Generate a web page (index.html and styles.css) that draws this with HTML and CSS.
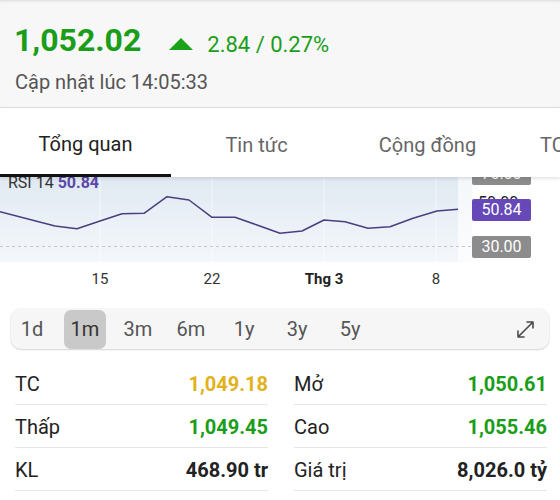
FILE: index.html
```html
<!DOCTYPE html>
<html lang="vi">
<head>
<meta charset="utf-8">
<link rel="stylesheet" href="styles.css">
</head>
<body>
<div class="page">
  <header class="quote">
    <div class="price-row">
      <span class="price">1,052.02</span>
      <span class="change"><span class="tri"></span><span>2.84 / 0.27%</span></span>
    </div>
    <div class="updated">Cập nhật lúc 14:05:33</div>
  </header>

  <nav class="tabs">
    <div class="tab active">Tổng quan</div>
    <div class="tab">Tin tức</div>
    <div class="tab">Cộng đồng</div>
    <div class="tab tab-last">TCDN</div>
  </nav>

  <section class="chart">
    <div class="plot">
      <div class="rsi-label">RSI 14 <b>50.84</b></div>
      <svg class="lines" width="472" height="85" viewBox="0 0 472 85">
        <line x1="100" y1="0" x2="100" y2="85" class="vgrid"/>
        <line x1="212" y1="0" x2="212" y2="85" class="vgrid"/>
        <line x1="324" y1="0" x2="324" y2="85" class="vgrid"/>
        <line x1="436" y1="0" x2="436" y2="85" class="vgrid"/>
        <line x1="0" y1="69.5" x2="472" y2="69.5" class="dash"/>
        <polyline class="rsi" points="0,34.7 55,49 77,51.7 100,44 122,36.7 144,36.3 167,19.7 189,23 212,40.3 235,40.3 257,48 280,56.3 302,54 324,43 345,44.7 368,51.3 390,49.7 413,41.3 437,34 458,32.3"/>
      </svg>
    </div>
    <div class="axis">
      <div class="tag tag-grey tag-70">70.00</div>
      <div class="ghost">50.00</div>
      <div class="tag tag-purple">50.84</div>
      <div class="tag tag-grey tag-30">30.00</div>
    </div>
  </section>

  <div class="xaxis">
    <span>15</span>
    <span>22</span>
    <span class="strong">Thg 3</span>
    <span>8</span>
  </div>

  <div class="periods">
    <span class="period">1d</span>
    <span class="period selected">1m</span>
    <span class="period">3m</span>
    <span class="period">6m</span>
    <span class="period">1y</span>
    <span class="period">3y</span>
    <span class="period">5y</span>
    <svg class="expand" width="19" height="19" viewBox="0 0 19 19">
      <path d="M2 17 L17 2 M11 2 H17 V8 M2 11 V17 H8" fill="none" stroke="#4a4a4a" stroke-width="1.6" stroke-linecap="round" stroke-linejoin="round"/>
    </svg>
  </div>

  <section class="stats">
    <div class="stat"><span class="label">TC</span><span class="val ref">1,049.18</span></div>
    <div class="stat"><span class="label">Mở</span><span class="val up">1,050.61</span></div>
    <div class="stat"><span class="label">Thấp</span><span class="val up">1,049.45</span></div>
    <div class="stat"><span class="label">Cao</span><span class="val up">1,055.46</span></div>
    <div class="stat"><span class="label">KL</span><span class="val">468.90 tr</span></div>
    <div class="stat"><span class="label">Giá trị</span><span class="val">8,026.0 tỷ</span></div>
  </section>
</div>
</body>
</html>
```

FILE: styles.css
```css
* { box-sizing: border-box; }
html, body {
  margin: 0;
  padding: 0;
  background: #fff;
}
body {
  font-family: Roboto, "Noto Sans", "Liberation Sans", sans-serif;
  color: #222;
  width: 560px;
  height: 500px;
  overflow: hidden;
}
.page { width: 560px; }

/* header */
.quote {
  height: 108px;
  background: #f7f7f7;
  border-bottom: 1px solid #dcdcdc;
  box-shadow: inset 0 3px 3px -2px rgba(0,0,0,0.12);
  padding: 21px 0 0 14px;
}
.price-row {
  display: flex;
  align-items: flex-start;
  height: 38px;
}
.price {
  font-size: 32px;
  line-height: 38px;
  font-weight: 700;
  color: #1a9e1a;
}
.change {
  display: flex;
  align-items: center;
  margin-top: 11px;
  margin-left: 28px;
  font-size: 22px;
  line-height: 26px;
  color: #1a9e1a;
}
.tri {
  width: 0;
  height: 0;
  border-left: 12px solid transparent;
  border-right: 12px solid transparent;
  border-bottom: 12px solid #1aa31a;
  margin-right: 14px;
  margin-bottom: 3px;
}
.updated {
  margin-top: 11px;
  font-size: 20px;
  line-height: 24px;
  color: #555;
  padding-left: 1px;
}

/* tabs */
.tabs {
  position: relative;
  z-index: 2;
  display: flex;
  height: 69px;
  background: #fff;
  overflow: hidden;
  box-shadow: 0 2px 3px rgba(0,0,0,0.10);
}
.tab {
  flex: 0 0 171px;
  text-align: center;
  font-size: 20px;
  line-height: 69px;
  padding-top: 3px;
  color: #666;
  white-space: nowrap;
}
.tab.active {
  color: #222;
  border-bottom: 3px solid #111;
  line-height: 66px;
}
.tab-last {
  text-align: left;
  padding-left: 27px;
}

/* chart */
.chart {
  display: flex;
  height: 85px;
  overflow: hidden;
  position: relative;
}
.plot {
  position: relative;
  width: 472px;
  height: 85px;
  background: linear-gradient(90deg, transparent 0 458px, rgba(255,255,255,0.65) 458px),
              linear-gradient(180deg, #e0e9f2 0%, #eef3f8 70%, #f4f7fa 100%);
}
.lines { display: block; }
.vgrid { stroke: rgba(255,255,255,0.6); stroke-width: 1; }
.dash { stroke: #c3c7cc; stroke-width: 1; stroke-dasharray: 3 3; }
.rsi { fill: none; stroke: #4a3e80; stroke-width: 1.5; stroke-linejoin: round; }
.rsi-label {
  position: absolute;
  left: 8px;
  top: -3px;
  font-size: 16px;
  line-height: 18px;
  color: #333;
}
.rsi-label b { color: #5b48a8; font-weight: 700; }

.axis {
  position: relative;
  flex: 1;
  background: #fff;
}
.tag {
  position: absolute;
  left: 0;
  width: 59px;
  height: 22px;
  border-radius: 2px;
  color: #fff;
  font-size: 16px;
  line-height: 22px;
  text-align: center;
}
.tag-grey { background: #8c8c8c; }
.tag-70 { top: -14px; }
.tag-purple { top: 22px; background: #6648b8; }
.tag-30 { top: 59px; }
.ghost {
  position: absolute;
  left: 6px;
  top: 17px;
  font-size: 16px;
  line-height: 18px;
  color: #222;
}

/* x axis */
.xaxis {
  display: flex;
  height: 34px;
  padding-left: 44px;
  align-items: center;
}
.xaxis span {
  width: 112px;
  text-align: center;
  font-size: 15px;
  color: #333;
}
.xaxis .strong { font-weight: 700; color: #222; }

/* period selector */
.periods {
  margin: 13px 11px 0;
  height: 40px;
  display: flex;
  align-items: center;
  gap: 11px;
  background: #f6f6f6;
  border-radius: 10px;
  box-shadow: 0 1px 2px rgba(0,0,0,0.14), 0 0 0 1px rgba(0,0,0,0.03);
}
.period {
  width: 42px;
  height: 39px;
  line-height: 39px;
  text-align: center;
  font-size: 20px;
  color: #555;
  border-radius: 7px;
}
.period.selected {
  background: #c9c9c9;
  color: #333;
}
.expand {
  margin-left: auto;
  margin-right: 14px;
}

/* stats */
.stats {
  margin-top: 13px;
  display: grid;
  grid-template-columns: 1fr 1fr;
  column-gap: 26px;
  padding: 0 13px 0 15px;
}
.stat {
  height: 43px;
  display: flex;
  justify-content: space-between;
  align-items: center;
  border-bottom: 1px solid #e6e6e6;
  padding-top: 2px;
}
.label {
  font-size: 20px;
  color: #222;
}
.val {
  font-size: 20px;
  font-weight: 700;
  color: #222;
}
.val.up { color: #1a9e1a; }
.val.ref { color: #e2b21c; }
```
